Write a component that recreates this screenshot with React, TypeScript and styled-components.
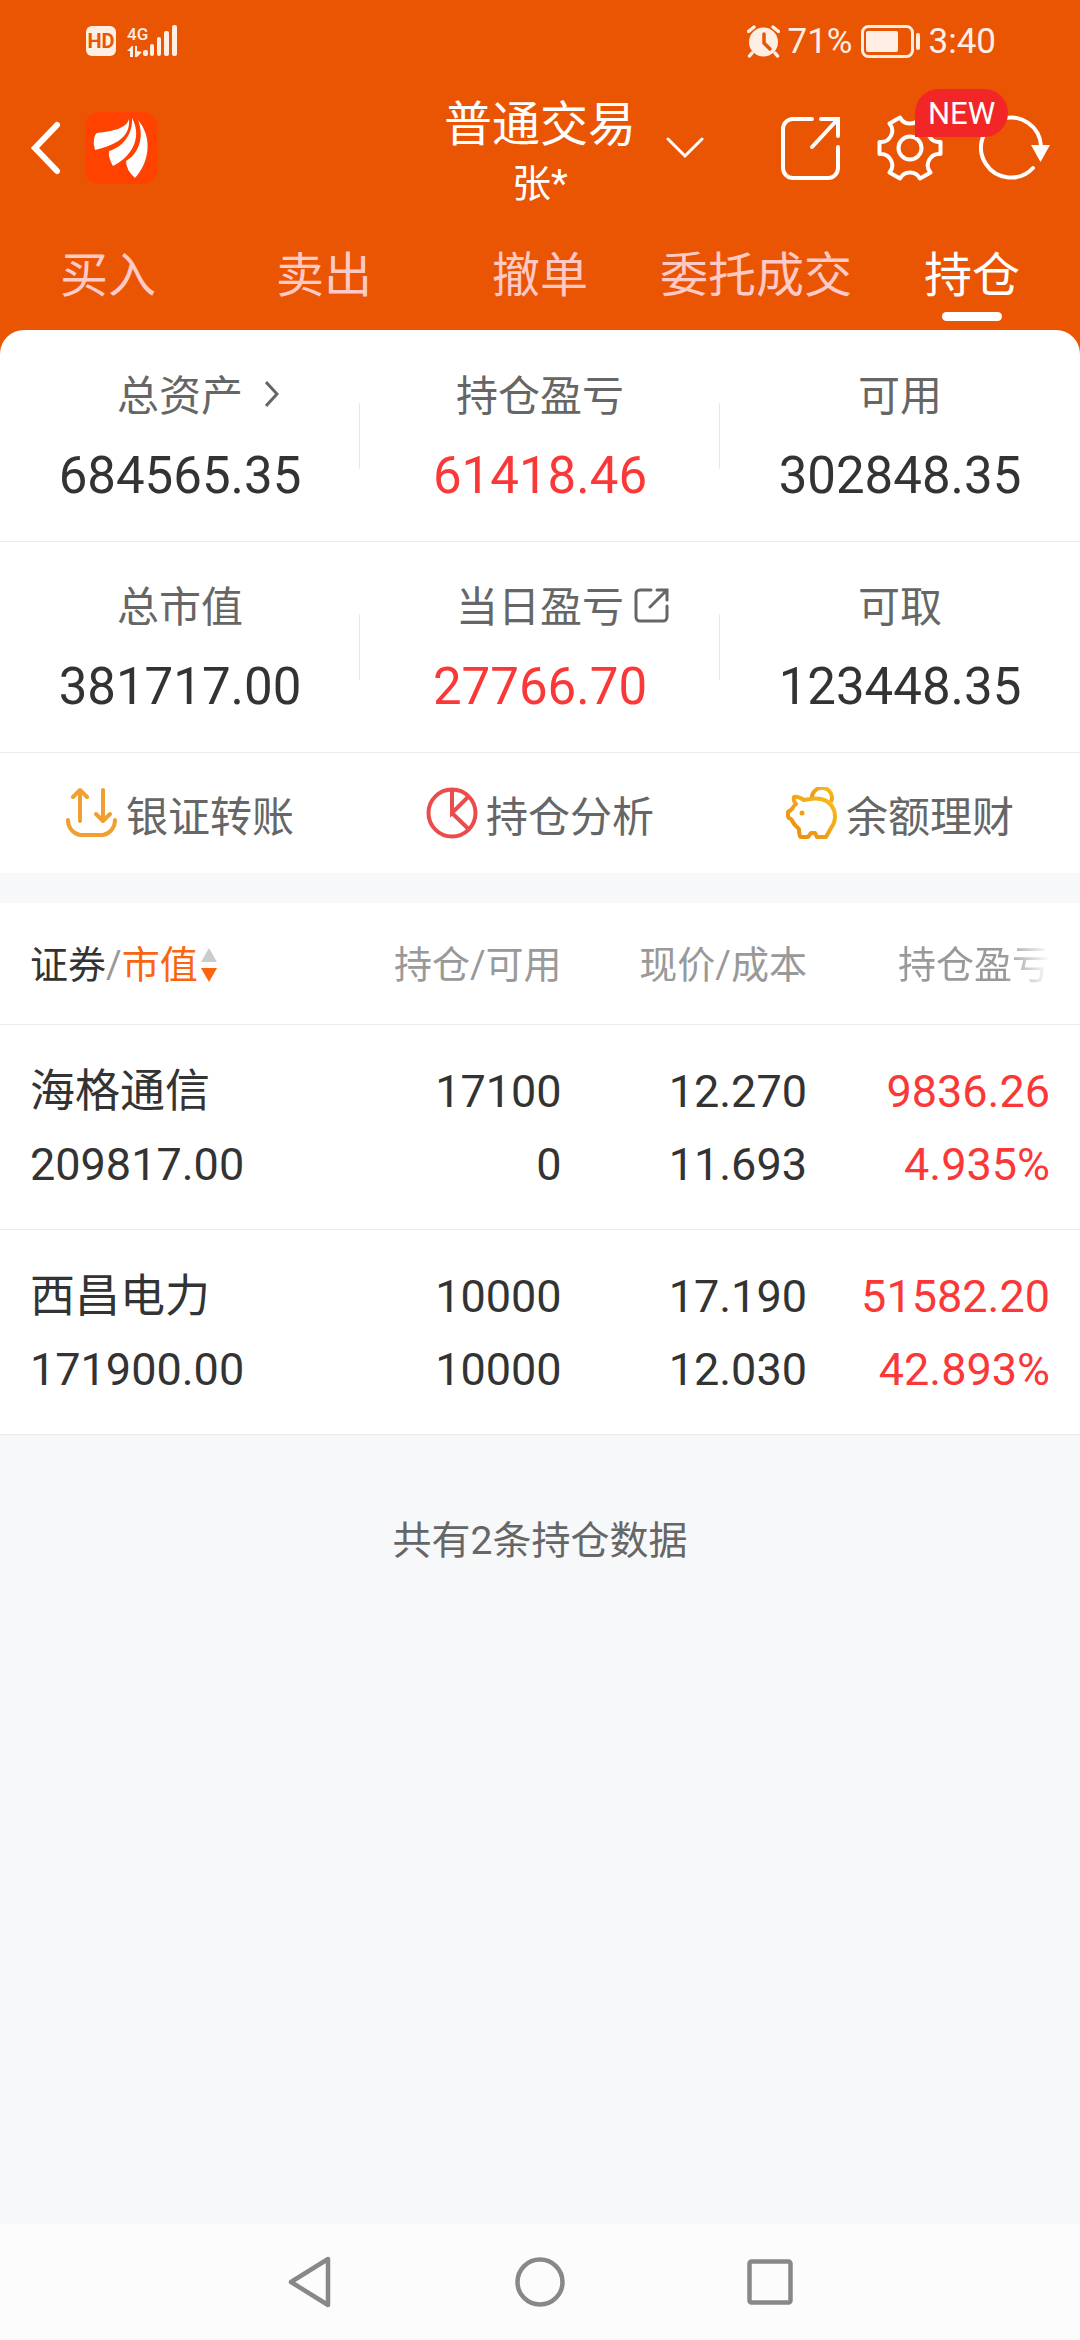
import React from 'react';
import styled, { createGlobalStyle } from 'styled-components';

const color = {
  brand: '#ea5504',
  status: '#ffeee4',
  tab: '#ffc9c5',
  text: '#333333',
  label: '#666666',
  muted: '#999999',
  rise: '#fa3838',
  line: '#ebebeb',
  page: '#f7f8fa',
};

const Global = createGlobalStyle`
  *, *::before, *::after { box-sizing: border-box; }
  body {
    margin: 0;
    background: ${color.page};
    color: ${color.text};
    font-family: Roboto, "Noto Sans CJK SC", sans-serif;
  }
  svg { display: block; flex: none; }
  button {
    margin: 0;
    padding: 0;
    border: 0;
    background: none;
    color: inherit;
    font: inherit;
    cursor: pointer;
  }
`;

const Page = styled.div`
  display: flex;
  flex-direction: column;
  min-height: 100vh;
`;

const Header = styled.header`
  background: ${color.brand};
  color: #fff;
`;

const StatusBar = styled.div`
  display: flex;
  justify-content: space-between;
  align-items: center;
  height: 82px;
  padding: 0 84px 0 86px;
  color: ${color.status};
`;

const StatusGroup = styled.div<{ $gap: number }>`
  display: flex;
  align-items: center;
  gap: ${(p) => p.$gap}px;
`;

const HdBadge = styled.span`
  width: 30px;
  height: 30px;
  border-radius: 6px;
  background: ${color.status};
  color: ${color.brand};
  font-size: 20px;
  font-weight: 700;
  line-height: 31px;
  text-align: center;
`;

const Network = styled.div`
  display: flex;
  align-items: flex-end;
`;

const NetworkType = styled.div`
  display: flex;
  flex-direction: column;
  gap: 4px;
  width: 16px;
  font-size: 17px;
  font-weight: 500;
  line-height: 16px;
`;

const StatusText = styled.span`
  padding-top: 2px;
  font-size: 35px;
  line-height: 40px;
`;

const TitleBar = styled.div`
  display: grid;
  grid-template-columns: 1fr auto 1fr;
  align-items: center;
  height: 132px;
  padding: 0 30px;
`;

const TitleLeft = styled.div`
  display: flex;
  align-items: center;
  gap: 24px;
`;

const TitleStack = styled.div`
  display: flex;
  flex-direction: column;
  align-items: center;
  gap: 4px;
  padding-top: 8px;
`;

const Title = styled.h1`
  margin: 0;
  font-size: 48px;
  font-weight: 400;
  line-height: 60px;
`;

const Account = styled.span`
  font-size: 39px;
  line-height: 50px;
`;

const TitleRight = styled.div`
  display: flex;
  align-items: center;
  justify-content: space-between;
  padding-left: 30px;
`;

const Tools = styled.div`
  display: flex;
  align-items: center;
  gap: 36px;
`;

const ToolButton = styled.button`
  position: relative;
`;

const NewBadge = styled.span`
  position: absolute;
  z-index: 1;
  left: 38px;
  bottom: 44px;
  padding: 1px 13px 0;
  border-radius: 24px 24px 24px 0;
  background: #f22626;
  font-size: 31px;
  line-height: 47px;
`;

const Tabs = styled.nav`
  display: grid;
  grid-template-columns: repeat(5, 1fr);
  margin-top: 16px;
`;

const Tab = styled.button<{ $active?: boolean }>`
  display: flex;
  flex-direction: column;
  align-items: center;
  gap: 1px;
  padding: 11px 0 9px;
  color: ${(p) => (p.$active ? '#fff' : color.tab)};
  font-size: 48px;
  line-height: 70px;
  white-space: nowrap;

  &::after {
    content: '';
    width: 60px;
    height: 9px;
    border-radius: 5px;
    background: ${(p) => (p.$active ? '#fff' : 'transparent')};
  }
`;

const CardBackdrop = styled.div`
  background: linear-gradient(${color.brand} 24px, #fff 24px);
`;

const Card = styled.section`
  border-radius: 24px 24px 0 0;
  background: #fff;
`;

const SummaryRow = styled.div`
  display: grid;
  grid-template-columns: repeat(3, 1fr);
  height: 211px;
  padding-top: 32px;
  border-bottom: 1px solid ${color.line};

  &:first-child { height: 212px; padding-top: 33px; }
`;

const Metric = styled.div`
  position: relative;

  &:not(:last-child)::after {
    content: '';
    position: absolute;
    right: 0;
    top: 40px;
    width: 1px;
    height: 66px;
    background: #e8e8e8;
  }
`;

const MetricLabel = styled.div`
  display: grid;
  grid-template-columns: 1fr auto 1fr;
  align-items: center;
  color: ${color.label};
  font-size: 42px;
  line-height: 56px;
`;

const LabelText = styled.span`
  grid-column: 2;
  padding-top: 6px;
`;

const LabelLink = styled.button<{ $gap: number }>`
  justify-self: start;
  padding-left: ${(p) => p.$gap}px;
`;

const MetricValue = styled.div<{ $rise?: boolean }>`
  margin-top: 18px;
  color: ${(p) => (p.$rise ? color.rise : color.text)};
  font-size: 51px;
  line-height: 66px;
  text-align: center;
`;

const Actions = styled.div`
  display: grid;
  grid-template-columns: repeat(3, 1fr);
`;

const Action = styled.button`
  display: flex;
  align-items: center;
  justify-content: center;
  gap: 8px;
  height: 120px;
  color: ${color.label};
  font-size: 42px;
`;

const Holdings = styled.table`
  width: 100%;
  margin-top: 30px;
  border-collapse: collapse;
  table-layout: fixed;
  background: #fff;
`;

const HeadCell = styled.th<{ $width: string; $left?: boolean; $fade?: boolean }>`
  width: ${(p) => p.$width};
  height: 121px;
  padding: 4px ${(p) => (p.$fade ? 30 : 0)}px 0 ${(p) => (p.$left ? 30 : 0)}px;
  border-bottom: 1px solid ${color.line};
  color: ${color.muted};
  font-size: 38px;
  font-weight: 400;
  line-height: 56px;
  text-align: ${(p) => (p.$left ? 'left' : 'right')};
  white-space: nowrap;
`;

const SortButton = styled.button`
  display: inline-flex;
  align-items: center;
  line-height: 56px;
`;

const Dark = styled.span`
  color: ${color.text};
`;

const Sorted = styled.span`
  margin-right: 3px;
  color: #fb6510;
`;

const Faded = styled.span`
  display: inline-block;
  mask-image: linear-gradient(to right, #000 70%, transparent 100%);
`;

const Cell = styled.td<{ $rise?: boolean }>`
  height: 205px;
  padding: 2px 0 0;
  border-bottom: 1px solid ${color.line};
  color: ${(p) => (p.$rise ? color.rise : color.text)};
  font-size: 45px;
  line-height: 73px;
  text-align: right;
  white-space: nowrap;

  &:first-child { padding-left: 30px; text-align: left; }
  &:last-child { padding-right: 30px; }
`;

const Line = styled.div``;

const Count = styled.p`
  flex: 1;
  margin: 0;
  padding-top: 78px;
  color: ${color.label};
  font-size: 39px;
  line-height: 56px;
  text-align: center;
`;

const SystemNav = styled.nav`
  display: flex;
  justify-content: center;
  height: 116px;
  background: #fcfcfc;
`;

const SystemButton = styled.button`
  display: flex;
  align-items: center;
  justify-content: center;
  width: 230px;
`;

const DataArrows = () => (
  <svg width="16" height="11" viewBox="0 0 16 11" fill="currentColor">
    <path d="M0 5 5 0h1v11H3V5zM8 0h2v5l5 1-5 5H8z" />
  </svg>
);

const SignalBars = () => (
  <svg width="34" height="32" viewBox="0 0 34 32" fill="currentColor">
    <rect x="0" y="25" width="5" height="6" rx="2" />
    <rect x="7" y="19" width="4" height="12" rx="2" />
    <rect x="14" y="12" width="4" height="19" rx="2" />
    <rect x="21" y="6" width="5" height="25" rx="2" />
    <rect x="29" y="0" width="5" height="31" rx="2" />
  </svg>
);

const AlarmIcon = () => (
  <svg width="33" height="34" viewBox="0 0 33 34">
    <circle cx="16.5" cy="18" r="14.5" fill="currentColor" />
    <path d="M1.5 7.5 7 3M31.500 7.500 26 3M5 29l-2.500 3M28 29l2.500 3" stroke="currentColor" strokeWidth="3.500" fill="none" strokeLinecap="round" />
    <path d="M17 10v9l6 6" stroke={color.brand} strokeWidth="3.500" fill="none" strokeLinecap="round" />
  </svg>
);

const BatteryIcon = () => (
  <svg width="60" height="33" viewBox="0 0 60 33">
    <rect x="1.500" y="1.500" width="50" height="30" rx="6" fill="none" stroke="currentColor" strokeWidth="3" />
    <rect x="5" y="6" width="32" height="21" rx="2" fill="currentColor" />
    <rect x="55" y="8" width="4" height="17" rx="2" fill="currentColor" />
  </svg>
);

const BackIcon = () => (
  <svg width="31" height="54" viewBox="0 0 31 54" fill="none" stroke="#fff" strokeWidth="6" strokeLinecap="round" strokeLinejoin="miter">
    <path d="M27 4 5 27l22 23" />
  </svg>
);

const Logo = () => (
  <svg width="72" height="72" viewBox="0 0 72 72">
    <rect width="72" height="72" rx="14" fill="#ff4200" />
    <g fill="#fff">
      <path d="M44 7C42 16 29 19 12 21Q10 22 9 27Q8 32 10 38C25 34 46 28 44 7Z" />
      <path d="M47 6C48 22 38 35 24 39Q23 46 28 54C43 47 59 28 47 6Z" />
      <path d="M53 8C60 26 53 42 41 49Q41 58 50 66C63 52 69 27 53 8Z" />
    </g>
  </svg>
);

const ChevronDown = () => (
  <svg width="38" height="22" viewBox="0 0 38 22" fill="none" stroke="#fff" strokeWidth="3" strokeLinecap="round">
    <path d="M2 2l17 17L36 2" />
  </svg>
);

const ShareIcon = () => (
  <svg width="60" height="66" viewBox="0 0 60 66" fill="none" stroke="#fff" strokeWidth="4" strokeLinecap="round">
    <path d="M31 4H12A10 10 0 0 0 2 14V53A10 10 0 0 0 12 63H47A10 10 0 0 0 57 53V32M40 4H57V21M57 4 31 32" />
  </svg>
);

const GearIcon = () => (
  <svg width="66" height="66" viewBox="0 0 66 66" fill="none" stroke="#fff" strokeWidth="4" strokeLinejoin="round">
    <path d="M23 2.500 12.500 8.500A11.300 11.300 0 0 1 2.500 27V39A11.300 11.300 0 0 1 12.500 57.500L23 63.500A11.300 11.300 0 0 1 43 63.500L53.500 57.500A11.300 11.300 0 0 1 63.500 39V27A11.300 11.300 0 0 1 53.500 8.500L43 2.500A11.300 11.300 0 0 1 23 2.500Z" />
    <circle cx="33" cy="33" r="11.500" />
  </svg>
);

const RefreshIcon = () => (
  <svg width="71" height="66" viewBox="0 0 71 66">
    <path d="M54 53A30 30 0 1 1 62 31" fill="none" stroke="#fff" strokeWidth="4" strokeLinecap="round" />
    <path d="M52 30H71L61.500 47Z" fill="#fff" />
  </svg>
);

const ChevronRight = () => (
  <svg width="14" height="26" viewBox="0 0 14 26" fill="none" stroke="currentColor" strokeWidth="3">
    <path d="M1 1l11 12L1 25" />
  </svg>
);

const SmallShareIcon = () => (
  <svg width="35" height="35" viewBox="0 0 35 35" fill="none" stroke="currentColor" strokeWidth="3" strokeLinecap="round">
    <path d="M17 2H6A4 4 0 0 0 2 6V29A4 4 0 0 0 6 33H29A4 4 0 0 0 33 29V18M23 2H33V12M33 2 16 19" />
  </svg>
);

const TransferIcon = () => (
  <svg width="52" height="52" viewBox="0 0 52 52" fill="none" stroke="#f09f31" strokeWidth="4" strokeLinecap="round" strokeLinejoin="round">
    <path d="M14 34V3M7 10l7-7 7 7M37 3V34M30 27l7 7 7-7M2 33A15 15 0 0 0 14 48H37A15 15 0 0 0 49 33" />
  </svg>
);

const PieIcon = () => (
  <svg width="52" height="52" viewBox="0 0 52 52" fill="none" stroke="#ec4b4c" strokeWidth="4">
    <circle cx="26" cy="26" r="23.500" />
    <path d="M26 3V26L42.500 9.500M26 26 42.500 42" />
  </svg>
);

const PiggyIcon = () => (
  <svg width="52" height="52" viewBox="0 0 52 52" fill="none" strokeWidth="4" strokeLinejoin="round">
    <defs>
      <linearGradient id="piggy" x1="0" y1="1" x2="1" y2="0">
        <stop offset="0" stopColor="#ea8a12" />
        <stop offset="1" stopColor="#f8bd1c" />
      </linearGradient>
    </defs>
    <g stroke="url(#piggy)">
      <path d="M26 12A10 10 0 1 1 45 15" />
      <path d="M8 10Q12 9 18 13C34 9 44 13 48 23Q51 33 45 41L40 50H31L29 46H25L22 50H15Q13 50 13 42Q8 38 5 32Q2 31 2 29V25Q5 23 6 22Q8 18 10 17Q7 14 8 10Z" />
    </g>
    <circle cx="16" cy="26" r="2.500" fill="#f0a015" />
  </svg>
);

const SortIcon = () => (
  <svg width="16" height="34" viewBox="0 0 16 34">
    <path d="M0 14 8 0l8 14z" fill="#cccccc" />
    <path d="M0 20h16L8 34z" fill="#fb6510" />
  </svg>
);

const NavBackIcon = () => (
  <svg width="46" height="52" viewBox="0 0 46 52" fill="none" stroke="#888" strokeWidth="4.500" strokeLinejoin="round">
    <path d="M41 3V49L4 26Z" />
  </svg>
);

const NavHomeIcon = () => (
  <svg width="50" height="50" viewBox="0 0 50 50" fill="none" stroke="#888" strokeWidth="4.500">
    <circle cx="25" cy="25" r="22.500" />
  </svg>
);

const NavRecentIcon = () => (
  <svg width="46" height="46" viewBox="0 0 46 46" fill="none" stroke="#888" strokeWidth="4.500">
    <rect x="2.500" y="2.500" width="41" height="41" rx="2" />
  </svg>
);

const tabs = ['买入', '卖出', '撤单', '委托成交', '持仓'];

type MetricData = { label: string; value: string; rise?: boolean; link?: 'chevron' | 'share' };

const summary: MetricData[][] = [
  [
    { label: '总资产', value: '684565.35', link: 'chevron' },
    { label: '持仓盈亏', value: '61418.46', rise: true },
    { label: '可用', value: '302848.35' },
  ],
  [
    { label: '总市值', value: '381717.00' },
    { label: '当日盈亏', value: '27766.70', rise: true, link: 'share' },
    { label: '可取', value: '123448.35' },
  ],
];

const holdings = [
  {
    name: '海格通信', marketValue: '209817.00', amount: '17100', available: '0',
    price: '12.270', cost: '11.693', profit: '9836.26', rate: '4.935%',
  },
  {
    name: '西昌电力', marketValue: '171900.00', amount: '10000', available: '10000',
    price: '17.190', cost: '12.030', profit: '51582.20', rate: '42.893%',
  },
];

export default function App() {
  return (
    <Page>
      <Global />
      <Header>
        <StatusBar>
          <StatusGroup $gap={11}>
            <HdBadge>HD</HdBadge>
            <Network>
              <NetworkType>
                4G
                <DataArrows />
              </NetworkType>
              <SignalBars />
            </Network>
          </StatusGroup>
          <StatusGroup $gap={8}>
            <AlarmIcon />
            <StatusText>71%</StatusText>
            <BatteryIcon />
            <StatusText>3:40</StatusText>
          </StatusGroup>
        </StatusBar>

        <TitleBar>
          <TitleLeft>
            <button aria-label="返回"><BackIcon /></button>
            <Logo />
          </TitleLeft>
          <TitleStack>
            <Title>普通交易</Title>
            <Account>张*</Account>
          </TitleStack>
          <TitleRight>
            <button aria-label="切换账户"><ChevronDown /></button>
            <Tools>
              <ToolButton aria-label="分享"><ShareIcon /></ToolButton>
              <ToolButton aria-label="设置">
                <GearIcon />
                <NewBadge>NEW</NewBadge>
              </ToolButton>
              <ToolButton aria-label="刷新"><RefreshIcon /></ToolButton>
            </Tools>
          </TitleRight>
        </TitleBar>

        <Tabs>
          {tabs.map((name) => (
            <Tab key={name} $active={name === '持仓'}>{name}</Tab>
          ))}
        </Tabs>
      </Header>

      <CardBackdrop>
        <Card>
          {summary.map((row) => (
            <SummaryRow key={row[0].label}>
              {row.map((m) => (
                <Metric key={m.label}>
                  <MetricLabel>
                    <LabelText>{m.label}</LabelText>
                    {m.link === 'chevron' && (
                      <LabelLink $gap={22} aria-label="资产详情"><ChevronRight /></LabelLink>
                    )}
                    {m.link === 'share' && (
                      <LabelLink $gap={10} aria-label="分享当日盈亏"><SmallShareIcon /></LabelLink>
                    )}
                  </MetricLabel>
                  <MetricValue $rise={m.rise}>{m.value}</MetricValue>
                </Metric>
              ))}
            </SummaryRow>
          ))}
          <Actions>
            <Action><TransferIcon />银证转账</Action>
            <Action><PieIcon />持仓分析</Action>
            <Action><PiggyIcon />余额理财</Action>
          </Actions>
        </Card>
      </CardBackdrop>

      <Holdings>
        <thead>
          <tr>
            <HeadCell $width="30%" $left>
              <SortButton><Dark>证券</Dark>/<Sorted>市值</Sorted><SortIcon /></SortButton>
            </HeadCell>
            <HeadCell $width="22%">持仓/可用</HeadCell>
            <HeadCell $width="auto">现价/成本</HeadCell>
            <HeadCell $width="273px" $fade><Faded>持仓盈亏</Faded></HeadCell>
          </tr>
        </thead>
        <tbody>
          {holdings.map((h) => (
            <tr key={h.name}>
              <Cell><Line>{h.name}</Line><Line>{h.marketValue}</Line></Cell>
              <Cell><Line>{h.amount}</Line><Line>{h.available}</Line></Cell>
              <Cell><Line>{h.price}</Line><Line>{h.cost}</Line></Cell>
              <Cell $rise><Line>{h.profit}</Line><Line>{h.rate}</Line></Cell>
            </tr>
          ))}
        </tbody>
      </Holdings>

      <Count>共有2条持仓数据</Count>

      <SystemNav>
        <SystemButton aria-label="后退"><NavBackIcon /></SystemButton>
        <SystemButton aria-label="主屏幕"><NavHomeIcon /></SystemButton>
        <SystemButton aria-label="最近任务"><NavRecentIcon /></SystemButton>
      </SystemNav>
    </Page>
  );
}
